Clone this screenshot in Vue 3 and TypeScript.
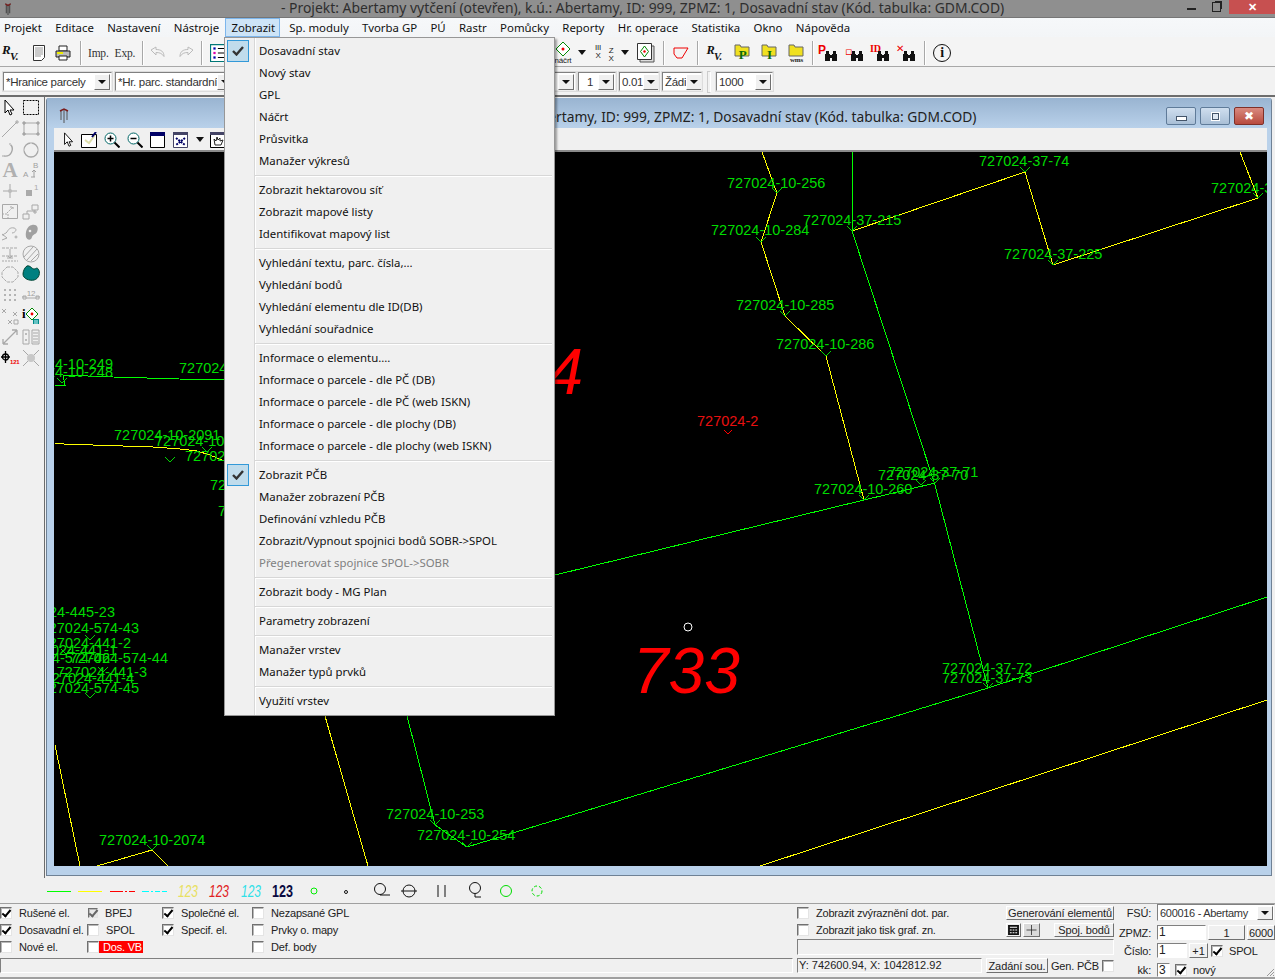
<template>
  <div class="app">
    <header class="titlebar">
      <svg class="app-ico" viewBox="0 0 14 16"><path d="M4 2l3 2 3-2M5 3v10M7 3v12M9 3v10" fill="none" stroke="#333" stroke-width="1"/><path d="M4 2l3 2 3-2" fill="none" stroke="#7a1d1d" stroke-width="1.5"/></svg>
      <span class="title-text">- Projekt: Abertamy vytčení (otevřen), k.ú.: Abertamy, ID: 999, ZPMZ: 1, Dosavadní stav (Kód. tabulka: GDM.COD)</span>
      <div class="win-btns">
        <span class="wb"><i class="wb-min"></i></span>
        <span class="wb"><i class="wb-max"></i></span>
        <span class="wb wb-close">✕</span>
      </div>
    </header>

    <nav class="menubar">
      <span v-for="m in menus" :key="m" class="menu-item" :class="{ active: m === 'Zobrazit' }">{{ m }}</span>
    </nav>

    <div class="toolbar tb1">
      <div class="tb-left">
        <span class="rv"><b>R</b><b class="rv-v">V.</b></span>
        <svg class="ic ml10" viewBox="0 0 16 18"><path d="M2.5 1.5h11v12l-3 3h-8z" fill="#fff" stroke="#333"/><path d="M4.5 4h7M4.5 6h7M4.5 8h7M4.5 10h7M4.5 12h5" stroke="#333" stroke-dasharray="1 1"/></svg>
        <svg class="ic ml6" viewBox="0 0 18 18"><path d="M5 2h8v5H5z" fill="#fff" stroke="#222"/><path d="M2 7h14v6H2z" fill="#bbb" stroke="#222"/><path d="M5 12h8v4H5z" fill="#fff" stroke="#222"/><path d="M3 9h6" stroke="#ee0" stroke-width="2"/></svg>
        <i class="sep ml8"></i>
        <span class="serif ml6">Imp.</span>
        <span class="serif ml6">Exp.</span>
        <i class="sep ml7"></i>
        <svg class="ic ml5" viewBox="0 0 18 18"><path d="M2 6l5-3v2.500c5 0 8 2 8 7-2-3-4-4-8-4V11z" fill="none" stroke="#bbb"/></svg>
        <svg class="ic ml10" viewBox="0 0 18 18"><path d="M16 6l-5-3v2.500c-5 0-8 2-8 7 2-3 4-4 8-4V11z" fill="none" stroke="#bbb"/></svg>
        <i class="sep ml6"></i>
        <svg class="ic ml7" viewBox="0 0 16 16"><path d="M.5.5h15v15H.5z" fill="#fff" stroke="#077"/><path d="M3 3h2v2H3z" fill="#00a"/><path d="M3 7h2v2H3z" fill="#d0a"/><path d="M3 11h2v2H3z" fill="#00a"/><path d="M7 4h6M7 8h6M7 12h6" stroke="#000"/></svg>
      </div>
      <svg class="ic" viewBox="0 0 24 24" style="width:24px;height:24px"><path d="M12 1l7 7-7 7-7-7z" fill="#fff" stroke="#080"/><circle cx="12" cy="8" r="1.500" fill="#e00"/><text x="12" y="22" class="ic-txt" text-anchor="middle">náčrt</text></svg>
      <i class="drop ml3"></i>
      <svg class="ic ml6" viewBox="0 0 26 20" style="width:26px;height:20px"><text x="6" y="7" class="ic-txt" text-anchor="middle">III</text><text x="6" y="15" class="ic-txt" text-anchor="middle">X</text><text x="19" y="10" class="ic-txt" text-anchor="middle">Z</text><text x="19" y="18" class="ic-txt" text-anchor="middle">X</text></svg>
      <i class="drop ml3"></i>
      <svg class="ic ml8" viewBox="0 0 18 20" style="width:18px;height:20px"><path d="M3 3h14v16H3z" fill="#ddd" stroke="#555"/><path d="M.5.5h14v16H.5z" fill="#fff" stroke="#333"/><path d="M7.500 3l4 5.500-4 5.500-4-5.500z" fill="none" stroke="#080"/><circle cx="7.500" cy="8.500" r="1.200" fill="#e00"/></svg>
      <i class="sep ml8"></i>
      <svg class="ic ml8" viewBox="0 0 16 12" style="width:16px;height:12px"><path d="M1 1h14L9 11H4L1 7z" fill="none" stroke="#e00"/></svg>
      <i class="sep ml8"></i>
      <span class="rv small ml6"><b>R</b><b class="rv-v">V.</b></span>
      <svg v-for="f in folders" :key="f.t" class="folder" viewBox="0 0 16 20" :class="f.t === 'P' ? 'ml10' : 'ml11'">
        <path d="M1 2h5l1 2h8v9H1z" fill="#f0e020" stroke="#666"/>
        <text x="8.500" :y="f.y" :fill="f.c" :font-size="f.s" class="folder-t" text-anchor="middle">{{ f.t }}</text>
      </svg>
      <i class="sep ml8"></i>
      <span v-for="b in binos" :key="b.t" class="bino" :class="b.cls">
        <span class="bino-t">{{ b.t }}</span>
        <svg viewBox="0 0 14 12"><path d="M1 4h5v7H1zM8 4h5v7H8zM2 1h3v3H2zM9 1h3v3H9zM6 5h2v3H6z" fill="#111"/></svg>
      </span>
      <i class="sep ml6"></i>
      <span class="info ml7">i</span>
    </div>

    <div class="toolbar tb2">
      <div class="combo c-a"><span>*Hranice parcely</span><i class="arrow"></i></div>
      <div class="combo c-b"><span>*Hr. parc. standardní</span><i class="arrow"></i></div>
      <div class="combo c-c ml3"><span></span><i class="arrow"></i></div>
      <div class="combo c-d ml3"><span class="ctr">1</span><i class="arrow"></i></div>
      <div class="combo c-e ml3"><span>0.01</span><i class="arrow"></i></div>
      <div class="combo c-f ml3"><span>Žádi</span><i class="arrow"></i></div>
      <i class="grip"></i>
      <div class="combo c-g"><span>1000</span><i class="arrow"></i></div>
    </div>

    <div class="workspace">
      <aside class="tools">
        <svg v-for="(t, i) in tools" :key="i" class="tool" viewBox="0 0 18 18" v-html="t"></svg>
      </aside>
      <div class="mdi">
        <section class="child">
          <div class="child-title">
            <svg class="child-ico" viewBox="0 0 14 16"><path d="M4 2v10M7 2v13M10 2v10" fill="none" stroke="#555"/><path d="M3 3l4-2 4 2" fill="none" stroke="#7a1d1d" stroke-width="1.500"/></svg>
            <span class="child-text">- Projekt: Abertamy vytčení (otevřen), k.ú.: Abertamy, ID: 999, ZPMZ: 1, Dosavadní stav (Kód. tabulka: GDM.COD)</span>
            <div class="child-btns">
              <span class="cb"><i class="cb-min"></i></span>
              <span class="cb"><i class="cb-max"></i></span>
              <span class="cb cb-close">✖</span>
            </div>
          </div>
          <div class="child-body">
            <div class="child-tools">
              <svg class="ct" viewBox="0 0 16 18"><path d="M3 1v13l3-3 2 5 2-1-2-4h4z" fill="#fff" stroke="#000"/></svg>
              <svg class="ct ml4" viewBox="0 0 16 16"><path d="M.5 2.500h15v13H.5z" fill="#fff" stroke="#000"/><path d="M4 8l4 3 6-8" stroke="#dda" stroke-width="2" fill="none"/><path d="M11 5l4-5" stroke="#006" stroke-width="2"/></svg>
              <svg class="ct ml7" viewBox="0 0 16 16"><circle cx="6.500" cy="6.500" r="5.500" fill="#fff" stroke="#066"/><path d="M3.500 6.500h6M6.500 3.500v6" stroke="#000" stroke-width="1.500"/><path d="M10.500 10.500l5 5" stroke="#000" stroke-width="2"/></svg>
              <svg class="ct ml7" viewBox="0 0 16 16"><circle cx="6.500" cy="6.500" r="5.500" fill="#fff" stroke="#066"/><path d="M3.500 6.500h6" stroke="#000" stroke-width="1.500"/><path d="M10.500 10.500l5 5" stroke="#000" stroke-width="2"/></svg>
              <svg class="ct ml7" viewBox="0 0 16 16"><path d="M.5.500h14v15H.5z" fill="#fff" stroke="#000"/><path d="M0 0h15v4H0z" fill="#006"/></svg>
              <svg class="ct ml7" viewBox="0 0 16 16"><path d="M.5.500h14v15H.5z" fill="#fff" stroke="#446"/><path d="M0 0h15v3H0z" fill="#446"/><path d="M3 6l9 7M12 6l-9 7" stroke="#006" stroke-width="2" stroke-dasharray="2 1"/></svg>
              <i class="drop ml7"></i>
              <svg class="ct ml6" viewBox="0 0 16 16"><path d="M.5.500h15v15H.5z" fill="#fff" stroke="#000"/><path d="M0 0h16v3H0z" fill="#446"/><path d="M5 13L4 7l2 2 1-4 1 3 2-2v3l3-1-2 5z" fill="#fff" stroke="#222"/></svg>
            </div>
            <svg class="canvas" viewBox="54 152 1213 714" preserveAspectRatio="none">
              <rect x="54" y="152" width="1213" height="714" fill="#000"/>
              <g fill="none" stroke-width="1" shape-rendering="crispEdges">
                <polyline v-for="(l, i) in greenLines" :key="'g' + i" :points="l" stroke="#00ff00"/>
                <polyline v-for="(l, i) in yellowLines" :key="'y' + i" :points="l" stroke="#ffff00"/>
                <path :d="tickPath" stroke="#00d800"/>
                <path d="M724 430l4 4 4-4" stroke="#ff0000"/>
              </g>
              <circle cx="688" cy="627" r="4" fill="none" stroke="#fff"/>
              <text v-for="t in labels" :key="t.s + t.x" :x="t.x" :y="t.y" :text-anchor="t.end ? 'end' : 'start'" class="lbl">{{ t.s }}</text>
              <text x="697" y="426" class="lbl lbl-red">727024-2</text>
              <text x="583" y="394" class="big" text-anchor="end">724</text>
              <text x="633" y="693" class="big">733</text>
            </svg>
          </div>
        </section>
      </div>

      <div class="dropdown">
        <template v-for="(group, gi) in menuGroups" :key="gi">
          <div v-if="gi > 0" class="dd-sep"></div>
          <div v-for="item in group" :key="item.t" class="dd-item" :class="{ disabled: item.off }">
            <span v-if="item.on" class="dd-check"><svg viewBox="0 0 12 10"><path d="M1 5l3.500 3.500L11 1" fill="none" stroke="#333" stroke-width="2.400"/></svg></span>
            <span class="dd-label">{{ item.t }}</span>
          </div>
        </template>
      </div>
    </div>

    <svg class="legend" viewBox="0 878 1275 25">
      <rect x="47" y="891" width="24" height="1" fill="#00ff00"/>
      <rect x="78" y="891" width="24" height="1" fill="#ffff00"/>
      <g fill="#ff0000">
        <rect x="110" y="891" width="13" height="1"/>
        <rect x="125" y="891" width="2" height="1"/>
        <rect x="129" y="891" width="6" height="1"/>
      </g>
      <g fill="#00ffff">
        <rect x="142" y="891" width="7" height="1"/>
        <rect x="151" y="891" width="2" height="1"/>
        <rect x="155" y="891" width="5" height="1"/>
        <rect x="162" y="891" width="5" height="1"/>
      </g>
      <text x="178" y="897" class="lg-num it" fill="#e8e060" textLength="20" lengthAdjust="spacingAndGlyphs">123</text>
      <text x="209" y="897" class="lg-num it" fill="#e02020" textLength="20" lengthAdjust="spacingAndGlyphs">123</text>
      <text x="241" y="897" class="lg-num it" fill="#30e0e8" textLength="20" lengthAdjust="spacingAndGlyphs">123</text>
      <text x="272" y="897" class="lg-num bd" fill="#0a0a40" textLength="21" lengthAdjust="spacingAndGlyphs">123</text>
      <g fill="none">
        <circle cx="314" cy="891" r="3" stroke="#00ee00"/>
        <circle cx="346" cy="892" r="1.500" stroke="#111"/>
        <circle cx="380" cy="889" r="5.500" stroke="#111"/>
        <path d="M380 895h10" stroke="#111"/>
        <circle cx="409" cy="891" r="6" stroke="#111"/>
        <path d="M401 891h16" stroke="#111"/>
        <path d="M438 885v12M445 885v12" stroke="#111"/>
        <circle cx="475" cy="888" r="5.500" stroke="#111"/>
        <path d="M475 894v3h6" stroke="#111"/>
        <circle cx="506" cy="891" r="5.500" stroke="#00dd00"/>
        <circle cx="537" cy="891" r="5" stroke="#00dd00" stroke-dasharray="3 2"/>
      </g>
    </svg>

    <footer class="panel">
      <div class="panel-main">
        <div class="panel-top">
          <div class="checks">
            <label v-for="c in checks" :key="c.t" class="chk-row" :class="c.cls">
              <span class="chk" :class="{ on: c.on, dim: c.dim }"></span>{{ c.t }}
            </label>
          </div>
          <div class="mid">
            <div class="mid-row">
              <label class="chk-row"><span class="chk"></span>Zobrazit zvýraznění dot. par.</label>
              <button class="btn gen">Generování elementů</button>
            </div>
            <div class="mid-row">
              <label class="chk-row"><span class="chk"></span>Zobrazit jako tisk graf. zn.</label>
              <div class="mid-btns">
                <button class="btn sq"><svg viewBox="0 0 12 11"><path d="M0 0h12v11H0z" fill="#111"/><path d="M2 2h8v1H2zM2 5h2v1H2zM5 5h2v1H5zM8 5h2v1H8zM2 8h2v1H2zM5 8h2v1H5zM8 8h2v1H8z" fill="#fff"/></svg></button>
                <button class="btn sq plus"><svg viewBox="0 0 13 13"><path d="M6.500 0v13M0 6.500h13" stroke="#222"/></svg></button>
                <button class="btn spoj">Spoj. bodů</button>
              </div>
            </div>
            <div class="sunken mid-box"></div>
          </div>
        </div>
        <div class="status">
          <div class="sunken st-a"></div>
          <div class="sunken st-b">Y: 742600.94, X: 1042812.92</div>
          <button class="btn st-btn">Zadání sou.</button>
          <label class="st-gen">Gen. PČB<span class="chk"></span></label>
        </div>
      </div>
      <div class="side">
        <div class="side-row r1"><span class="side-l">FSÚ:</span><div class="combo c-fsu"><span>600016 - Abertamy</span><i class="arrow"></i></div></div>
        <div class="side-row r2"><span class="side-l">ZPMZ:</span><div class="sunken field f-z">1</div><button class="btn f-1">1</button><button class="btn f-6">6000</button></div>
        <div class="side-row r3"><span class="side-l">Číslo:</span><div class="sunken field f-c">1</div><button class="btn f-p">+1</button><span class="chk on ml3"></span><span class="side-t">SPOL</span></div>
        <div class="side-row r4"><span class="side-l">kk:</span><div class="sunken field f-k">3</div><span class="chk on ml5"></span><span class="side-t nv">nový</span></div>
      </div>
      <svg class="resize" viewBox="0 0 10 10"><path d="M9 2L2 9M9 5L5 9M9 8L8 9" stroke="#999"/></svg>
    </footer>
  </div>
</template>

<script setup lang="ts">
interface MenuItem {
  t: string
  on?: boolean
  off?: boolean
}

interface Label {
  s: string
  x: number
  y: number
  end?: boolean
}

const menus = ['Projekt', 'Editace', 'Nastavení', 'Nástroje', 'Zobrazit', 'Sp. moduly', 'Tvorba GP', 'PÚ', 'Rastr', 'Pomůcky', 'Reporty', 'Hr. operace', 'Statistika', 'Okno', 'Nápověda']

const menuGroups: MenuItem[][] = [
  [{ t: 'Dosavadní stav', on: true }, { t: 'Nový stav' }, { t: 'GPL' }, { t: 'Náčrt' }, { t: 'Průsvitka' }, { t: 'Manažer výkresů' }],
  [{ t: 'Zobrazit hektarovou síť' }, { t: 'Zobrazit mapové listy' }, { t: 'Identifikovat mapový list' }],
  [{ t: 'Vyhledání textu, parc. čísla,...' }, { t: 'Vyhledání bodů' }, { t: 'Vyhledání elementu dle ID(DB)' }, { t: 'Vyhledání souřadnice' }],
  [{ t: 'Informace o elementu....' }, { t: 'Informace o parcele - dle PČ (DB)' }, { t: 'Informace o parcele - dle PČ (web ISKN)' }, { t: 'Informace o parcele - dle plochy (DB)' }, { t: 'Informace o parcele - dle plochy (web ISKN)' }],
  [{ t: 'Zobrazit PČB', on: true }, { t: 'Manažer zobrazení PČB' }, { t: 'Definování vzhledu PČB' }, { t: 'Zobrazit/Vypnout spojnici bodů SOBR->SPOL' }, { t: 'Přegenerovat spojnice SPOL->SOBR', off: true }],
  [{ t: 'Zobrazit body - MG Plan' }],
  [{ t: 'Parametry zobrazení' }],
  [{ t: 'Manažer vrstev' }, { t: 'Manažer typů prvků' }],
  [{ t: 'Využití vrstev' }]
]

const folders = [
  { t: 'P', c: '#0a6a0a', y: 16, s: 13 },
  { t: 'I', c: '#0a6a0a', y: 16, s: 13 },
  { t: 'wms', c: '#222', y: 19, s: 7 }
]

const binos = [
  { t: 'P', cls: 'b1' },
  { t: '▫', cls: 'b2' },
  { t: 'ID', cls: 'b3' },
  { t: '✕', cls: 'b4' }
]

const g = 'fill="none" stroke="#a8a8a8"'
const tools: string[] = [
  '<path d="M4 1v13l3-3 2 5 2-1-2-4h4z" fill="#fff" stroke="#000"/>',
  '<path d="M1.500 1.500h15v14h-15z" fill="none" stroke="#000" stroke-dasharray="2 1"/>',
  `<path d="M1 17L16 2" ${g}/><path d="M15 1h2v2h-2z" ${g}/>`,
  `<path d="M2 3h14v11H2z" ${g}/><path d="M1 2h2v2H1zM15 2h2v2h-2zM1 13h2v2H1zM15 13h2v2h-2z" fill="#ccc" stroke="#999"/>`,
  `<path d="M9 3a7 7 0 0 1-6 12" ${g} stroke-width="1.400"/><path d="M8 2h2v2H8zM1 14h2v2H1z" fill="#ccc"/>`,
  `<circle cx="9" cy="9" r="7" ${g} stroke-width="1.300"/><path d="M8 1h2v2H8zM1 8h2v2H1zM15 8h2v2h-2z" fill="#ccc"/>`,
  '<text x="9" y="16" text-anchor="middle" font-family="Liberation Serif, serif" font-size="21" font-weight="700" fill="#b0b0b0">A</text>',
  '<text x="11" y="7" font-family="Liberation Sans, sans-serif" font-size="8" fill="#a0a0a0">B</text><text x="1" y="16" font-family="Liberation Sans, sans-serif" font-size="8" fill="#a0a0a0">A</text><path d="M12 9v7M10 11l2-2 2 2M9 16h4" fill="none" stroke="#a0a0a0"/>',
  `<path d="M9 2v14M2 9h14" ${g}/><circle cx="9" cy="9" r="2" fill="#bbb"/>`,
  '<path d="M4 8h6v6H4z" fill="#aaa"/><text x="12" y="8" font-family="Liberation Sans, sans-serif" font-size="8" fill="#aaa">1</text>',
  `<path d="M1.500 1.500h15v14h-15z" ${g}/><path d="M1 11h6v5M6 10l6-6M9 4h3v3" ${g} stroke-dasharray="2 1"/>`,
  `<path d="M1 11h6v5H1zM10 2h6v5h-6zM13 7v4M11 9h4M5 11V8h8" ${g}/>`,
  `<path d="M2 12c0-3 3-2 4-4s3-5 7-4 1 5-2 5M1 10l5 4-5 2" ${g}/><circle cx="15" cy="13" r="1" ${g}/>`,
  '<path d="M10 1c5-1 7 3 5 7-2 3-4 2-5 5-1 4-5 3-6 0-1-5 1-11 6-12z" fill="#a0a0a0"/><circle cx="8" cy="7" r="1.300" fill="#eee"/>',
  `<path d="M1 3h16M1 11h16" ${g} stroke-dasharray="3 1"/><path d="M1 16h16" ${g} stroke-dasharray="2 1"/><path d="M9 4v9M7 11l2 2 2-2M6 13h6" ${g}/>`,
  `<circle cx="9" cy="9" r="8" ${g}/><path d="M2 12l9-10M5 15l10-11M9 16l7-7" ${g}/>`,
  `<path d="M6 2h6l5 5v5l-5 5H6l-5-5V7z" ${g} stroke-dasharray="3 1"/>`,
  '<path d="M5 1c3-1 5 3 7 3s3-2 4 0c3 3 1 10-4 11-4 1-11-1-11-6 0-3 2-7 4-8z" fill="#008080" stroke="#043"/>',
  '<path d="M3 3h2v2H3zM8 3h2v2H8zM13 3h2v2h-2zM3 8h2v2H3zM8 8h2v2H8zM13 8h2v2h-2zM3 13h2v2H3zM8 13h2v2H8zM13 13h2v2h-2z" fill="#b4b4b4"/>',
  '<path d="M0 11h4M14 11h4" stroke="#aaa"/><path d="M1 10h3v3H1zM14 10h3v3h-3z" fill="none" stroke="#aaa"/><text x="9" y="10" text-anchor="middle" font-family="Liberation Sans, sans-serif" font-size="8" fill="#a0a0a0">12</text><path d="M4 12h10" stroke="#aaa"/>',
  `<path d="M1 2l4 4M5 2L1 6M7 13l4 4M11 13l-4 4M12 5l4 4M16 5l-4 4" ${g}/><path d="M13 13h4v4h-4z" ${g}/>`,
  '<text x="0" y="11" font-family="Liberation Serif, serif" font-weight="700" font-size="13" fill="#000">i</text><path d="M10 1l6 6-6 6-6-6z" fill="#fff" stroke="#080"/><circle cx="10" cy="7" r="1.400" fill="#e00"/><path d="M11 12h6v5h-6z" fill="#088"/><path d="M12 14h4M12 16h4" stroke="#cff"/>',
  `<path d="M2 16L16 2M2 16v-5M2 16h5M16 2v5M16 2h-5" ${g} stroke-width="1.300"/>`,
  `<path d="M1 2h6v14H1zM10 2h7v14h-7zM11 5h5M11 8h5M11 11h5M11 14h5" ${g}/><path d="M3 5h2v2H3zM3 11h2v2H3z" fill="#bbb"/>`,
  '<circle cx="4.500" cy="8" r="3" fill="none" stroke="#000" stroke-width="1.300"/><path d="M4.500 2v12M0 8h9" stroke="#000" stroke-width="1.300"/><text x="9" y="15" font-family="Liberation Sans, sans-serif" font-size="6" font-weight="700" fill="#e00">121</text>',
  `<path d="M1 1l16 16M17 1L1 17" ${g}/><circle cx="9" cy="9" r="4" fill="#c8c8c8"/>`
]

const greenLines = [
  '852,152 852,231 935,485 988,688',
  '555,575 864,500 935,483',
  '407,716 435,825 467,847 988,688 1267,597',
  '55,385 65,385 63,375 113,377 147,378 179,379 224,380'
]

const yellowLines = [
  '852,231 1025,172 1053,265 1258,198 1240,152',
  '762,152 777,193 761,242 785,316 826,356 864,500',
  '760,866 1267,700',
  '325,716 368,866',
  '55,745 80,866',
  '97,866 152,850 168,866',
  '55,443 64,444 93,445 123,446 153,447 180,449 197,451 210,455 224,461'
]

const ticks = [[1025, 172], [1258, 198], [777, 193], [761, 242], [852, 231], [1053, 265], [785, 316], [826, 356], [864, 500], [921, 485], [935, 483], [988, 688], [435, 825], [467, 847], [152, 850], [62, 383], [170, 462], [207, 452], [90, 640], [90, 698], [103, 672], [66, 654]]
const tickPath = ticks.map(([x, y]) => `M${x - 5} ${y - 5}l5 5 5-5`).join('')

const labels: Label[] = [
  { s: '727024-37-74', x: 979, y: 166 },
  { s: '727024-37-75', x: 1211, y: 193 },
  { s: '727024-10-256', x: 727, y: 188 },
  { s: '727024-37-215', x: 803, y: 225 },
  { s: '727024-10-284', x: 711, y: 235 },
  { s: '727024-37-225', x: 1004, y: 259 },
  { s: '727024-10-285', x: 736, y: 310 },
  { s: '727024-10-286', x: 776, y: 349 },
  { s: '727024-37-71', x: 888, y: 477 },
  { s: '727024-37-70', x: 878, y: 480 },
  { s: '727024-10-260', x: 814, y: 494 },
  { s: '727024-37-72', x: 942, y: 673 },
  { s: '727024-37-73', x: 942, y: 683 },
  { s: '727024-10-253', x: 386, y: 819 },
  { s: '727024-10-254', x: 417, y: 840 },
  { s: '727024-10-2074', x: 99, y: 845 },
  { s: '727024-10-249', x: 113, y: 369, end: true },
  { s: '727024-10-248', x: 113, y: 377, end: true },
  { s: '727024-10-250', x: 179, y: 373 },
  { s: '727024-10-2091', x: 114, y: 440 },
  { s: '727024-10-2090', x: 155, y: 446 },
  { s: '727024-10-262', x: 185, y: 461 },
  { s: '727024-10-263', x: 210, y: 490 },
  { s: '727024-10-264', x: 218, y: 516 },
  { s: '727024-445-23', x: 115, y: 617, end: true },
  { s: '727024-574-43', x: 139, y: 633, end: true },
  { s: '727024-441-2', x: 131, y: 648, end: true },
  { s: '727024-441-1', x: 117, y: 655, end: true },
  { s: '727024-574-44', x: 168, y: 663, end: true },
  { s: '727024-574-46', x: 110, y: 663, end: true },
  { s: '727024-441-3', x: 147, y: 677, end: true },
  { s: '727024-441-4', x: 134, y: 683, end: true },
  { s: '727024-574-45', x: 139, y: 693, end: true }
]

const checks = [
  { t: 'Rušené el.', on: true },
  { t: 'BPEJ', on: true, dim: true },
  { t: 'Společné el.', on: true },
  { t: 'Nezapsané GPL' },
  { t: 'Dosavadní el.', on: true },
  { t: 'SPOL', cls: 'spol' },
  { t: 'Specif. el.', on: true },
  { t: 'Prvky o. mapy' },
  { t: 'Nové el.' },
  { t: 'Dos. VB', cls: 'red' },
  { t: '', cls: 'blank' },
  { t: 'Def. body' }
]
</script>

<style>
html,
body {
  margin: 0;
  background: #f0f0f0;
}
</style>

<style scoped>
.app {
  width: 1275px;
  height: 979px;
  display: flex;
  flex-direction: column;
  position: relative;
  overflow: hidden;
  background: #f0f0f0;
  font-family: "Liberation Sans", sans-serif;
  font-size: 11px;
  letter-spacing: -0.2px;
  color: #111;
}

.ml3 { margin-left: 3px; }
.ml4 { margin-left: 4px; }
.ml5 { margin-left: 5px; }
.ml6 { margin-left: 6px; }
.ml7 { margin-left: 7px; }
.ml8 { margin-left: 8px; }
.ml10 { margin-left: 10px; }
.ml11 { margin-left: 11px; }

.titlebar {
  height: 17px;
  flex: none;
  display: flex;
  align-items: center;
  position: relative;
  background: #8f8f8f;
  border-bottom: 1px solid #767676;
}

.app-ico {
  width: 12px;
  height: 14px;
  margin-left: 2px;
}

.title-text {
  margin: -2px 0 0 267px;
  font: 13.9px "Noto Sans", sans-serif;
  letter-spacing: 0;
  color: #2e2e2e;
  white-space: nowrap;
}

.win-btns {
  margin-left: auto;
  height: 14px;
  align-self: flex-start;
  display: flex;
  align-items: center;
}

.wb {
  width: 25px;
  height: 14px;
  display: flex;
  align-items: center;
  justify-content: center;
}

.wb-min {
  width: 9px;
  height: 2px;
  margin-top: 4px;
  background: #222;
}

.wb-max {
  width: 7px;
  height: 8px;
  border: 1px solid #222;
  box-shadow: 2px -2px 0 -1px #222;
}

.wb-close {
  width: 46px;
  background: #c75050;
  color: #fff;
  font-size: 11px;
  font-weight: 700;
}

.menubar {
  height: 19px;
  flex: none;
  display: flex;
  align-items: center;
  background: linear-gradient(#f6f8fa, #f3f5f7);
  font: 11.4px "Noto Sans", sans-serif;
  letter-spacing: 0;
  color: #111;
}

.menu-item {
  height: 19px;
  line-height: 20px;
  padding: 0 6.5px 0 4px;
  margin-right: 2.85px;
  box-sizing: border-box;
  white-space: nowrap;
}

.menu-item.active {
  margin-left: -3px;
  margin-right: 5px;
  padding: 0 4px 0 5px;
  background: #cde4f7;
  border: 1px solid #7db6ec;
  line-height: 18px;
}

.toolbar {
  flex: none;
  display: flex;
  align-items: center;
  border-bottom: 1px solid #a8a8a8;
  box-sizing: border-box;
}

.tb1 {
  height: 30px;
  padding-top: 2px;
  background: #f4f4f4;
}

.tb2 {
  height: 30px;
  background: #f2f2f2;
  padding: 1px 0 0 3px;
  border-bottom: 2px solid #6d6d6d;
}

.tb-left {
  width: 551px;
  flex: none;
  display: flex;
  align-items: center;
  padding-left: 1px;
  box-sizing: border-box;
}

.ic {
  width: 18px;
  height: 18px;
  flex: none;
}

.ic-txt {
  font: 8px "Liberation Sans", sans-serif;
  fill: #222;
}

.rv {
  width: 19px;
  height: 20px;
  position: relative;
  flex: none;
  font: italic 700 13px "Liberation Serif", serif;
  color: #111;
}

.rv b {
  position: absolute;
  left: 1px;
  top: -1px;
}

.rv .rv-v {
  left: 9px;
  top: 7px;
  font-size: 11px;
}

.rv.small {
  transform: scale(0.95);
}

.serif {
  font: 11.5px "Liberation Serif", serif;
  letter-spacing: -0.2px;
  color: #333;
}

.sep {
  width: 0;
  height: 24px;
  flex: none;
  border-left: 1px solid #a8a8a8;
  border-right: 1px solid #fff;
}

.drop {
  width: 0;
  height: 0;
  flex: none;
  border: 4px solid transparent;
  border-top: 5px solid #111;
  border-bottom: 0;
}

.folder {
  width: 16px;
  height: 20px;
  flex: none;
}

.folder-t {
  font-family: "Liberation Serif", serif;
  font-weight: 700;
}

.bino {
  width: 22px;
  height: 20px;
  margin-left: 4px;
  position: relative;
  flex: none;
}

.bino svg {
  position: absolute;
  right: 2px;
  bottom: 1px;
  width: 14px;
  height: 12px;
}

.bino-t {
  position: absolute;
  left: 0;
  top: 0;
  color: #e00;
  font: 700 10px "Liberation Serif", serif;
}

.b1 .bino-t {
  font: 700 12px "Liberation Sans", sans-serif;
}

.b2 .bino-t {
  left: 1px;
  top: 2px;
  font: 700 11px "DejaVu Sans", sans-serif;
}

.b4 .bino-t {
  font: 400 10px "DejaVu Sans", sans-serif;
}

.info {
  width: 16px;
  height: 16px;
  flex: none;
  border: 1px solid #111;
  border-radius: 50%;
  text-align: center;
  font: 700 14px/16px "Liberation Serif", serif;
}

.combo {
  height: 19px;
  flex: none;
  display: flex;
  align-items: center;
  justify-content: space-between;
  padding: 0 1px 0 2px;
  box-sizing: border-box;
  background: #fff;
  border: 1px solid;
  border-color: #808080 #eee #eee #808080;
  box-shadow: 0 0 0 1px #dcdcdc;
  font-size: 11.5px;
  letter-spacing: -0.3px;
  color: #333;
  white-space: nowrap;
  overflow: hidden;
}

.combo .ctr {
  margin-left: 6px;
}

.arrow {
  width: 16px;
  height: 16px;
  flex: none;
  display: flex;
  align-items: center;
  justify-content: center;
  background: #f0f0f0;
  border: 1px solid;
  border-color: #fff #707070 #707070 #fff;
  box-sizing: border-box;
}

.arrow::after {
  content: "";
  border: 4px solid transparent;
  border-top: 4px solid #111;
  border-bottom: 0;
}

.c-a { width: 109px; }
.c-b { width: 120px; margin-left: 3px; }
.c-c { width: 338px; }
.c-d { width: 38px; margin-left: 2px; }
.c-e { width: 40px; }
.c-f { width: 40px; }
.c-g { width: 57px; }

.grip {
  width: 2px;
  height: 20px;
  margin: 0 5px;
  flex: none;
  border: 1px solid #ccc;
  border-right-color: #fff;
}

.workspace {
  height: 781px;
  flex: none;
  display: flex;
  position: relative;
}

.tools {
  width: 44px;
  flex: none;
  display: grid;
  grid-template-columns: 18px 18px;
  grid-auto-rows: 20.8px;
  column-gap: 3px;
  padding: 2px 0 0 1px;
  box-sizing: border-box;
  align-content: start;
}

.tool {
  width: 18px;
  height: 18px;
  overflow: visible;
}

.mdi {
  flex: 1;
  min-width: 0;
  padding: 1px 3px 2px 1px;
  background: #f0f0f0;
  border-left: 1px solid #6d6d6d;
  display: flex;
}

.child {
  flex: 1;
  min-width: 0;
  display: flex;
  flex-direction: column;
  padding: 0 4px 9px 7px;
  background: #b9d1ea;
  border: 1px solid #6f8195;
  border-top: 0;
  border-radius: 3px 3px 0 0;
}

.child-title {
  height: 30px;
  flex: none;
  box-sizing: border-box;
  display: flex;
  align-items: center;
  margin: 0 -4px 0 -7px;
  padding: 6px 0 0 10px;
  background: linear-gradient(#99b4d1, #b9d1ea);
}

.child-ico {
  width: 14px;
  height: 16px;
}

.child-text {
  margin-left: 187px;
  font: 13.8px "Noto Sans", sans-serif;
  letter-spacing: 0;
  color: #222;
  white-space: nowrap;
}

.child-btns {
  margin-left: auto;
  margin-right: 7px;
  display: flex;
  gap: 4px;
}

.cb {
  width: 30px;
  height: 18px;
  box-sizing: border-box;
  display: flex;
  align-items: center;
  justify-content: center;
  background: linear-gradient(#cfdeee, #a9bfd6);
  border: 1px solid #5f7b99;
  border-radius: 2px;
}

.cb-min {
  width: 9px;
  height: 3px;
  margin-top: 4px;
  background: #fff;
  border: 1px solid #44556a;
}

.cb-max {
  width: 5px;
  height: 5px;
  background: #dfe8f2;
  border: 1px solid #44556a;
  outline: 1px solid #fff;
}

.cb-close {
  background: linear-gradient(#d98a80, #b84a3e);
  border-color: #7f3028;
  color: #fff;
  font-size: 12px;
}

.child-body {
  flex: 1;
  min-height: 0;
  display: flex;
  flex-direction: column;
}

.child-tools {
  height: 21px;
  flex: none;
  display: flex;
  align-items: center;
  padding: 1px 0 0 7px;
  background: #f0f0f0;
  border-bottom: 2px solid #8a8a8a;
}

.ct {
  width: 16px;
  height: 16px;
  flex: none;
}

.canvas {
  width: 1213px;
  height: 714px;
  display: block;
  background: #000;
}

.lbl {
  font: 14.5px "Liberation Sans", sans-serif;
  letter-spacing: 0;
  fill: #00dc00;
}

.lbl-red {
  fill: #e81010;
}

.big {
  font: italic 64px "Liberation Sans", sans-serif;
  letter-spacing: 0;
  fill: #ff0000;
}

.dropdown {
  position: absolute;
  left: 224px;
  top: -60px;
  width: 331px;
  padding: 2px 0 3px;
  box-sizing: border-box;
  background: linear-gradient(to right, #f0f0f0 29px, #d7d7d7 29px, #d7d7d7 30px, #fff 30px, #fff 31px, #f0f0f0 31px);
  border: 1px solid #979797;
  box-shadow: 2px 2px 2px rgba(0, 0, 0, 0.35);
  font: 11.4px "Noto Sans", sans-serif;
  letter-spacing: 0;
  color: #111;
}

.dd-item {
  height: 22px;
  position: relative;
  display: flex;
  align-items: center;
}

.dd-label {
  margin: -2px 0 0 34px;
  white-space: nowrap;
}

.dd-item.disabled {
  color: #808080;
}

.dd-check {
  position: absolute;
  left: 2px;
  top: 0;
  width: 22px;
  height: 22px;
  box-sizing: border-box;
  display: flex;
  align-items: center;
  justify-content: center;
  background: #c0dcec;
  border: 1px solid #3399d8;
}

.dd-check svg {
  width: 12px;
  height: 10px;
}

.dd-sep {
  height: 0;
  margin: 3px 2px 2px 30px;
  border-top: 1px solid #d7d7d7;
  border-bottom: 1px solid #fff;
}

.legend {
  width: 1275px;
  height: 25px;
  flex: none;
  display: block;
}

.lg-num {
  font: 16px "Liberation Sans", sans-serif;
  letter-spacing: 0;
}

.lg-num.it {
  font-style: italic;
}

.lg-num.bd {
  font-weight: 700;
}

.panel {
  height: 76px;
  flex: none;
  display: flex;
  position: relative;
  box-sizing: border-box;
  border-top: 1px solid #a0a0a0;
  border-bottom: 2px solid #a0a0a0;
  color: #222;
}

.panel-main {
  width: 1118px;
  flex: none;
  display: flex;
  flex-direction: column;
}

.panel-top {
  height: 54px;
  flex: none;
  display: flex;
}

.checks {
  width: 797px;
  flex: none;
  display: grid;
  grid-template-columns: 87px 75px 90px 1fr;
  grid-auto-rows: 17px;
  box-sizing: border-box;
}

.chk-row {
  display: flex;
  align-items: center;
  gap: 7px;
  white-space: nowrap;
}

.chk {
  width: 12px;
  height: 12px;
  flex: none;
  position: relative;
  box-sizing: border-box;
  background: #fff;
  border: 1px solid;
  border-color: #707070 #e4e4e4 #e4e4e4 #707070;
  box-shadow: inset 1px 1px 0 #b8b8b8;
}

.chk.on::after {
  content: "";
  position: absolute;
  left: 3px;
  top: 0;
  width: 3px;
  height: 7px;
  border: solid #000;
  border-width: 0 2px 2px 0;
  transform: rotate(40deg);
}

.chk.dim {
  width: 10px;
  height: 10px;
  margin-left: 1px;
  background: #e8e8e8;
}

.chk.dim::after {
  left: 2px;
  top: -1px;
  border-color: #666;
}

.chk-row.red {
  margin-right: 19px;
  height: 12px;
  gap: 4px;
  align-self: center;
  background: #ff0000;
  color: #fff;
}

.chk-row.blank {
  visibility: hidden;
}

.mid {
  width: 318px;
  flex: none;
  display: flex;
  flex-direction: column;
  box-sizing: border-box;
}

.mid-row {
  height: 17px;
  flex: none;
  display: flex;
  align-items: center;
  justify-content: space-between;
  padding-right: 1px;
}

.mid-btns {
  display: flex;
  align-items: center;
}

.btn {
  padding: 0;
  margin: 0;
  height: 14px;
  box-sizing: border-box;
  background: #f0f0f0;
  border: 1px solid;
  border-color: #fff #707070 #707070 #fff;
  font: 11px "Liberation Sans", sans-serif;
  letter-spacing: -0.1px;
  color: #222;
  white-space: nowrap;
}

.gen {
  width: 108px;
}

.sq {
  width: 15px;
  display: flex;
  align-items: center;
  justify-content: center;
}

.sq svg {
  width: 11px;
  height: 10px;
}

.plus {
  width: 17px;
  margin-left: 2px;
  background: #dadada;
}

.spoj {
  width: 60px;
  margin-left: 14px;
}

.sunken {
  box-sizing: border-box;
  background: #f0f0f0;
  border: 1px solid;
  border-color: #808080 #fff #fff #808080;
}

.mid-box {
  height: 16px;
  margin-top: 1px;
  width: 317px;
}

.status {
  height: 15px;
  display: flex;
  align-items: center;
}

.st-a {
  width: 793px;
  height: 15px;
}

.st-b {
  width: 185px;
  height: 15px;
  margin-left: 4px;
  line-height: 13px;
  padding-left: 1px;
  letter-spacing: 0;
}

.st-btn {
  width: 62px;
  height: 15px;
  margin-left: 4px;
}

.st-gen {
  display: flex;
  align-items: center;
  gap: 3px;
  margin-left: 3px;
  white-space: nowrap;
}

.side {
  flex: 1;
  min-width: 0;
  display: flex;
  flex-direction: column;
}

.side-row {
  display: flex;
  align-items: center;
  flex: none;
}

.r1 { height: 17px; }
.r2 { height: 15px; margin-top: 4px; }
.r3 { height: 15px; margin-top: 3px; }
.r4 { height: 14px; margin-top: 5px; }

.side-l {
  width: 33px;
  margin-right: 6px;
  text-align: right;
  white-space: nowrap;
}

.c-fsu {
  width: 118px;
  height: 17px;
  font-size: 11px;
  box-shadow: none;
}

.c-fsu .arrow {
  height: 14px;
}

.field {
  height: 100%;
  background: #fff;
  line-height: 13px;
  padding-left: 1px;
  font-size: 12px;
}

.f-z { width: 49px; }
.f-c { width: 30px; }
.f-k { width: 13px; }

.f-1 {
  width: 37px;
  height: 15px;
  margin-left: 2px;
}

.f-6 {
  width: 28px;
  height: 15px;
  margin-left: 2px;
}

.f-p {
  width: 19px;
  height: 15px;
  margin-left: 2px;
}

.side-t {
  margin-left: 6px;
}

.resize {
  position: absolute;
  right: 0;
  bottom: 0;
  width: 10px;
  height: 10px;
}
</style>
